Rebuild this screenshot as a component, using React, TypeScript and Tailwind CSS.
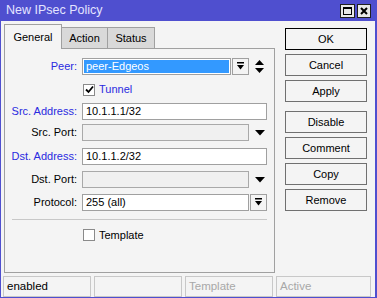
import React from 'react';

// small glyphs used by the combo boxes
const DropBar = () => (
  <svg width="9" height="9" viewBox="0 0 9 9">
    <rect x="1" y="0" width="7" height="1.5" fill="#000" />
    <polygon points="1,3 8,3 4.5,7.5" fill="#000" />
  </svg>
);

const DownTri = () => (
  <svg width="10" height="6" viewBox="0 0 10 6">
    <polygon points="0,0 10,0 5,5.5" fill="#000" />
  </svg>
);

const UpDown = () => (
  <svg width="9" height="13" viewBox="0 0 9 13">
    <polygon points="4.5,0 9,5 0,5" fill="#000" />
    <polygon points="0,8 9,8 4.5,13" fill="#000" />
  </svg>
);

const Check = () => (
  <svg width="9" height="9" viewBox="0 0 9 9">
    <path d="M1 4.5 L3.5 7 L8 1.5" stroke="#000" strokeWidth="1.8" fill="none" />
  </svg>
);

interface RowProps {
  label: string;
  blue?: boolean;
  mt: string;
  children: React.ReactNode;
}

const Row = ({ label, blue, mt, children }: RowProps) => (
  <div className={`flex items-center h-[17px] ${mt}`}>
    <div className={`w-[73px] text-right pr-[1px] ${blue ? 'text-[#2a2ae0]' : 'text-black'}`}>{label}</div>
    <div className="flex items-center ml-[4px]">{children}</div>
  </div>
);

const buttons = ['OK', 'Cancel', 'Apply', 'Disable', 'Comment', 'Copy', 'Remove'];

export default function App() {
  return (
    <div
      className="w-[377px] h-[298px] bg-[#4f4fcf] flex flex-col text-[11px] leading-none"
      style={{ fontFamily: '"Liberation Sans", Arial, sans-serif' }}
    >
      {/* title bar */}
      <div className="h-[22px] flex items-center pl-[6px] pr-[6px]">
        <span className="text-[#e4e4ff] text-[12.5px]">New IPsec Policy</span>
        <div className="ml-auto flex gap-[2px]">
          <div className="w-[15px] h-[14px] bg-[#e8e8e8] border border-[#202020] flex items-center justify-center">
            <div className="w-[9px] h-[8px] border border-black border-t-2" />
          </div>
          <div className="w-[14px] h-[14px] bg-[#e8e8e8] border border-[#202020] flex items-center justify-center">
            <svg width="8" height="8" viewBox="0 0 8 8">
              <path d="M1 1 L7 7 M7 1 L1 7" stroke="#000" strokeWidth="2" />
            </svg>
          </div>
        </div>
      </div>

      <div className="flex-1 mx-[1px] mr-[2px] mb-[1px] bg-[#f4f4f4] flex flex-col">
        <div className="flex">
          {/* left: tabs + panel */}
          <div className="ml-[3px] mt-[3px] w-[271px] flex flex-col">
            <div className="flex items-end h-[25px]">
              <div className="w-[58px] h-[25px] border border-b-0 border-[#a0a0a0] bg-[#f4f4f4] flex items-center justify-center">
                General
              </div>
              <div className="w-[46px] h-[22px] border-t border-r border-b border-[#a0a0a0] bg-[#d9d9d9] flex items-center justify-center">
                Action
              </div>
              <div className="w-[47px] h-[22px] border-t border-r border-b border-[#a0a0a0] bg-[#d9d9d9] flex items-center justify-center">
                Status
              </div>
              <div className="flex-1 border-b border-[#a0a0a0]" />
            </div>
            <div className="h-[224px] border border-t-0 border-[#a0a0a0] flex flex-col">
              <Row label="Peer:" blue mt="mt-[9px]">
                <div className="w-[149px] h-[17px] border border-[#a0a0a0] bg-white p-[1px]">
                  <div className="h-full bg-[#3399ff] text-white flex items-center pl-[2px]">peer-Edgeos</div>
                </div>
                <div className="ml-[1px] w-[17px] h-[17px] border border-[#a0a0a0] flex items-center justify-center">
                  <DropBar />
                </div>
                <div className="ml-[6px]">
                  <UpDown />
                </div>
              </Row>
              <div className="flex items-center h-[17px] mt-[6px] pl-[78px]">
                <div className="w-[12px] h-[12px] border border-[#8a8a8a] bg-white flex items-center justify-center">
                  <Check />
                </div>
                <span className="ml-[4px] text-[#2a2ae0]">Tunnel</span>
              </div>
              <Row label="Src. Address:" blue mt="mt-[5px]">
                <div className="w-[185px] h-[17px] border border-[#a0a0a0] bg-white flex items-center pl-[3px]">10.1.1.1/32</div>
              </Row>
              <Row label="Src. Port:" mt="mt-[4px]">
                <div className="w-[167px] h-[17px] border border-[#a9a9a9] bg-[#f0f0f0]" />
                <div className="ml-[6px]"><DownTri /></div>
              </Row>
              <Row label="Dst. Address:" blue mt="mt-[7px]">
                <div className="w-[185px] h-[17px] border border-[#a0a0a0] bg-white flex items-center pl-[3px]">10.1.1.2/32</div>
              </Row>
              <Row label="Dst. Port:" mt="mt-[6px]">
                <div className="w-[167px] h-[17px] border border-[#a9a9a9] bg-[#f0f0f0]" />
                <div className="ml-[6px]"><DownTri /></div>
              </Row>
              <Row label="Protocol:" mt="mt-[6px]">
                <div className="w-[167px] h-[17px] border border-[#a0a0a0] bg-white flex items-center pl-[3px]">255 (all)</div>
                <div className="ml-[1px] w-[17px] h-[17px] border border-[#a0a0a0] flex items-center justify-center">
                  <DropBar />
                </div>
              </Row>
              <div className="mt-[8px] ml-[7px] w-[255px] border-t border-[#c8c8c8]" />
              <div className="flex items-center h-[12px] mt-[9px] pl-[78px]">
                <div className="w-[12px] h-[12px] border border-[#8a8a8a] bg-white" />
                <span className="ml-[4px]">Template</span>
              </div>
            </div>
          </div>

          {/* right: buttons */}
          <div className="ml-[10px] mt-[7px] flex flex-col w-[82px]">
            {buttons.map((b, i) => (
              <div
                key={b}
                className={`h-[22px] flex items-center justify-center border bg-[#f4f4f4] ${
                  i === 0 ? 'border-[#000]' : 'border-[#707070]'
                } ${i === 0 ? '' : i === 3 ? 'mt-[9px]' : 'mt-[4px]'}`}
              >
                {b}
              </div>
            ))}
          </div>
        </div>

        {/* status bar */}
        <div className="mt-[3px] ml-[2px] flex gap-[3px] h-[21px] text-[11.5px]">
          <div className="w-[88px] border border-[#c8c8c8] flex items-center pl-[3px]">enabled</div>
          <div className="w-[88px] border border-[#c8c8c8]" />
          <div className="w-[88px] border border-[#c8c8c8] flex items-center pl-[3px] text-[#a8a8a8]">Template</div>
          <div className="w-[95px] border border-[#c8c8c8] flex items-center pl-[3px] text-[#a8a8a8]">Active</div>
        </div>
      </div>
    </div>
  );
}
